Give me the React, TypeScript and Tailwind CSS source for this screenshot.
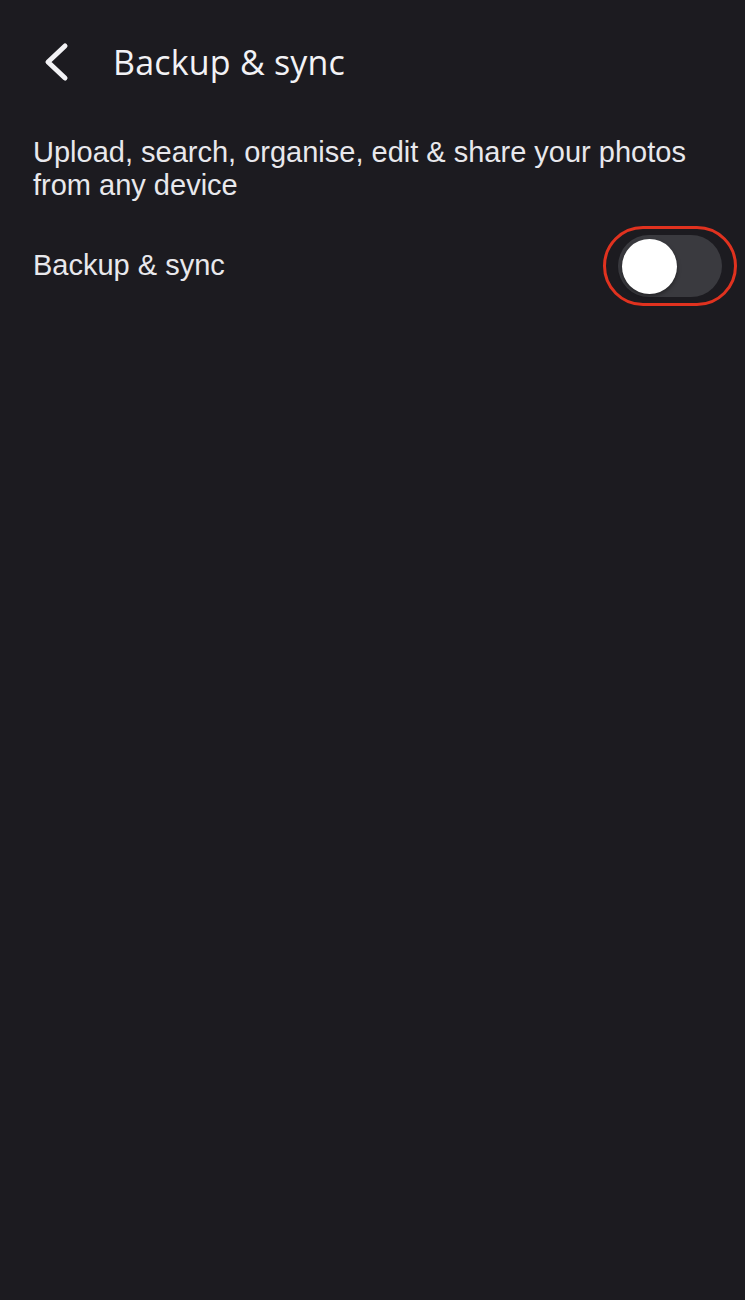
const BackChevron = () => (
  <svg width="30" height="40" viewBox="0 0 30 40" fill="none">
    <path
      d="M24 4 L7 20 L24 36"
      stroke="currentColor"
      strokeWidth="5"
      strokeLinecap="round"
      strokeLinejoin="round"
    />
  </svg>
);

const App = () => {
  return (
    <div className="min-h-[1300px] w-full bg-[#1c1b20] text-[#ececf0] font-['Liberation_Sans',sans-serif]">
      <header className="flex h-[124px] items-center">
        <button className="ml-[40px] flex h-[44px] w-[32px] items-center justify-center text-[#f2f2f5]">
          <BackChevron />
        </button>
        <h1 className="ml-[41px] text-[34px] font-normal tracking-[0.2px] text-[#f2f2f5] font-['Open_Sans',sans-serif]">
          Backup &amp; sync
        </h1>
      </header>
      <p className="mt-[12px] max-w-[720px] pl-[33px] pr-[20px] text-[29px] leading-[33px] text-[#e8e8ec]">
        Upload, search, organise, edit &amp; share your photos from any device
      </p>
      <div className="mt-[24px] flex items-center justify-between pl-[33px] pr-[8px]">
        <span className="text-[29px] text-[#e8e8ec]">Backup &amp; sync</span>
        <div className="rounded-full border-[3px] border-[#e0321f] px-[12px] py-[6px]">
          <div className="flex h-[62px] w-[104px] items-center rounded-full bg-[#3a3a3f] px-[4px]">
            <div className="h-[55px] w-[55px] rounded-full bg-white shadow-[0_2px_4px_rgba(0,0,0,0.4)]" />
          </div>
        </div>
      </div>
    </div>
  );
};

export default App;
